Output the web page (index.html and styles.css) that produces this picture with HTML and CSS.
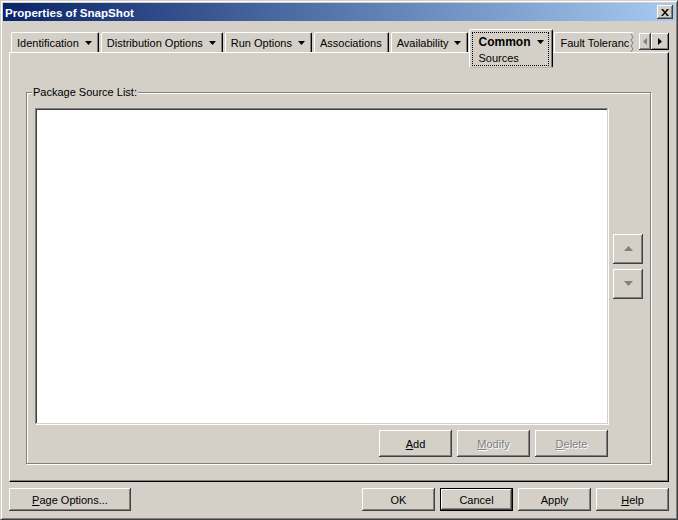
FILE: index.html
```html
<!DOCTYPE html>
<html lang="en">
  <head>
    <meta charset="UTF-8" />
    <title>Properties of SnapShot</title>
    <link rel="stylesheet" href="styles.css">
  </head>
  <body>
    <div class="window">
      <!-- Title bar -->
      <div class="titlebar">
        <span class="title">Properties of SnapShot</span>
        <button class="btn close-button" aria-label="Close">
          <svg width="8" height="7" viewBox="0 0 8 7"><path d="M0 0h2l2 2.5L6 0h2L5 3.5 8 7H6L4 4.5 2 7H0l3-3.5z" fill="#000"/></svg>
        </button>
      </div>

      <div class="client">
        <!-- Tab strip -->
        <div class="tabstrip">
          <div class="tab">Identification <svg class="caret" width="7" height="4" viewBox="0 0 7 4"><path d="M0 0h7L3.5 4z"/></svg></div>
          <div class="tab">Distribution Options <svg class="caret" width="7" height="4" viewBox="0 0 7 4"><path d="M0 0h7L3.5 4z"/></svg></div>
          <div class="tab">Run Options <svg class="caret" width="7" height="4" viewBox="0 0 7 4"><path d="M0 0h7L3.5 4z"/></svg></div>
          <div class="tab">Associations</div>
          <div class="tab">Availability <svg class="caret" width="7" height="4" viewBox="0 0 7 4"><path d="M0 0h7L3.5 4z"/></svg></div>
          <div class="tab tab-selected">
            <div class="focus-box">
              <div class="tab-head"><b>Common</b> <svg class="caret" width="7" height="4" viewBox="0 0 7 4"><path d="M0 0h7L3.5 4z"/></svg></div>
              <div>Sources</div>
            </div>
          </div>
          <div class="tab tab-clipped">
            <span>Fault Toleranc</span>
            <svg class="tear" width="4" height="18" viewBox="0 0 4 18"><path d="M1 0l2 3-2 3 2 3-2 3 2 3-2 3" fill="none" stroke="#808080"/></svg>
          </div>
          <div class="tab-scroll">
            <button class="btn scroll-left"><svg width="4" height="7" viewBox="0 0 4 7"><path d="M4 0v7L0 3.5z" fill="#808080"/></svg></button>
            <button class="btn scroll-right"><svg width="4" height="7" viewBox="0 0 4 7"><path d="M0 0v7l4-3.5z" fill="#000"/></svg></button>
          </div>
        </div>

        <!-- Tab page -->
        <div class="panel">
          <div class="group">
            <span class="legend">Package Source List:</span>
            <div class="group-body">
              <div class="listbox"></div>
              <div class="order-buttons">
                <button class="btn order-button"><svg width="9" height="5" viewBox="0 0 9 5"><path d="M4.5 0L9 5H0z" fill="#808080"/></svg></button>
                <button class="btn order-button"><svg width="9" height="5" viewBox="0 0 9 5"><path d="M0 0h9L4.5 5z" fill="#808080"/></svg></button>
              </div>
              <div class="list-actions">
                <button class="btn action-button"><u>A</u>dd</button>
                <button class="btn action-button disabled"><u>M</u>odify</button>
                <button class="btn action-button disabled"><u>D</u>elete</button>
              </div>
            </div>
          </div>
        </div>

        <!-- Dialog buttons -->
        <div class="footer">
          <button class="btn page-options"><u>P</u>age Options...</button>
          <div class="dialog-buttons">
            <button class="btn dialog-button">OK</button>
            <button class="btn dialog-button default">Cancel</button>
            <button class="btn dialog-button">Apply</button>
            <button class="btn dialog-button"><u>H</u>elp</button>
          </div>
        </div>
      </div>
    </div>
  </body>
</html>
```

FILE: styles.css
```css
body {
  margin: 0;
  background-color: #d4d0c8;
  font-family: "Liberation Sans", Arial, sans-serif;
  font-size: 11px;
  color: #000;
}

.window {
  width: 678px;
  height: 520px;
  box-sizing: border-box;
  padding: 2px;
  border: 1px solid;
  border-color: #d4d0c8 #404040 #404040 #d4d0c8;
  box-shadow: inset 1px 1px #fff, inset -1px -1px #808080;
  background-color: #d4d0c8;
}

/* Title bar */
.titlebar {
  height: 18px;
  padding: 0 2px;
  display: flex;
  align-items: center;
  justify-content: space-between;
  background: linear-gradient(to right, #0a246a, #a6caf0);
}

.title {
  color: #fff;
  font-weight: bold;
  font-size: 11.6px;
}

/* Generic raised 3D button */
.btn {
  margin: 0;
  padding: 0;
  border: none;
  background-color: #d4d0c8;
  font-family: inherit;
  font-size: 11px;
  color: #000;
  box-shadow: inset -1px -1px #404040, inset 1px 1px #fff, inset -2px -2px #808080;
  display: flex;
  align-items: center;
  justify-content: center;
}

.btn.disabled {
  color: #808080;
  text-shadow: 1px 1px #fff;
}

.close-button {
  width: 16px;
  height: 14px;
}

.client {
  padding: 8px 6px 0;
}

/* Tabs */
.tabstrip {
  height: 23px;
  padding-left: 2px;
  display: flex;
  align-items: flex-start;
}

.tab {
  margin-top: 3px;
  margin-right: 2px;
  height: 20px;
  box-sizing: border-box;
  padding: 0 6px 0 5px;
  border-top: 1px solid #fff;
  border-left: 1px solid #fff;
  border-right: 1px solid #000;
  border-radius: 2px 2px 0 0;
  box-shadow: inset -1px 0 #808080;
  display: flex;
  align-items: center;
  gap: 6px;
  white-space: nowrap;
}

.tab-selected {
  margin-top: 0;
  margin-left: -1px;
  margin-right: 1px;
  height: 39px;
  padding: 2px 3px 0 2px;
  display: block;
  position: relative;
  z-index: 1;
  background-color: #d4d0c8;
  border-bottom: 1px solid #bcb8b0;
  border-radius: 2px;
}

.focus-box {
  width: 77px;
  height: 34px;
  box-sizing: border-box;
  padding: 1px 0 0 5px;
  border: 1px dotted #000;
  line-height: 16px;
}

.tab-head {
  display: flex;
  align-items: center;
  gap: 7px;
}

.tab-head b {
  font-size: 12px;
}

.tab-clipped {
  padding-right: 0;
  gap: 1px;
  border-right: none;
  box-shadow: none;
}

.tab-scroll {
  margin-left: auto;
  margin-top: 4px;
  display: flex;
}

.scroll-left {
  width: 12px;
  height: 17px;
}

.scroll-right {
  width: 18px;
  height: 17px;
  box-shadow: inset -1px -1px #000, inset 1px 1px #fff, inset -2px -2px #808080;
}

/* Tab page */
.panel {
  width: 660px;
  height: 430px;
  box-sizing: border-box;
  padding: 39px 0 0 16px;
  border: 1px solid;
  border-color: #fff #000 #000 #fff;
  box-shadow: inset -1px -1px #808080;
}

.group {
  width: 625px;
  height: 372px;
  box-sizing: border-box;
  padding: 15px 0 0 8px;
  border: 1px solid #808080;
  box-shadow: inset 1px 1px #fff, 1px 1px #fff;
  position: relative;
}

.legend {
  position: absolute;
  top: -7px;
  left: 5px;
  padding: 0 1px;
  line-height: 13px;
  background-color: #d4d0c8;
}

.group-body {
  display: grid;
  grid-template-columns: 573px 30px;
  column-gap: 5px;
}

.listbox {
  height: 316px;
  box-sizing: border-box;
  background-color: #fff;
  border: 1px solid;
  border-color: #808080 #d4d0c8 #d4d0c8 #808080;
  box-shadow: inset 1px 1px #404040, 1px 1px #fff;
}

.order-buttons {
  align-self: center;
  display: flex;
  flex-direction: column;
  gap: 5px;
}

.order-button {
  width: 30px;
  height: 30px;
}

.list-actions {
  margin-top: 6px;
  display: flex;
  justify-content: flex-end;
  gap: 5px;
}

.action-button {
  width: 73px;
  height: 27px;
}

/* Footer */
.footer {
  width: 660px;
  margin-top: 6px;
  display: flex;
  justify-content: space-between;
}

.page-options {
  width: 122px;
  height: 23px;
}

.dialog-buttons {
  display: flex;
  gap: 5px;
}

.dialog-button {
  width: 73px;
  height: 23px;
}

.dialog-button.default {
  box-shadow: inset 0 0 0 1px #000, inset -2px -2px #404040, inset 2px 2px #fff, inset -3px -3px #808080;
}
```
